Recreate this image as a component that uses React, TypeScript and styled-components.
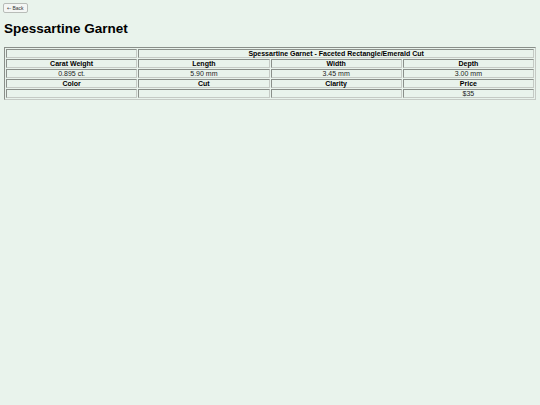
import React from "react";
import styled, { createGlobalStyle } from "styled-components";

const Global = createGlobalStyle`
  html, body { margin: 0; padding: 0; background: #e9f3ec; }
  body { font-family: "Liberation Sans", Arial, sans-serif; color: #000; }
`;

const Page = styled.div`
  padding: 3px 4px;
`;

const BackButton = styled.button`
  font-family: "Liberation Sans", Arial, sans-serif;
  font-size: 5px;
  line-height: 6px;
  padding: 1px 3px;
  margin-left: -1px;
  background: #f4f6f4;
  color: #333;
  border: 1px solid #b8bcb8;
  border-radius: 2px;
  display: block;
`;

const Title = styled.h1`
  font-size: 13.5px;
  font-weight: bold;
  margin: 8px 0 10px 0;
  line-height: 16px;
`;

const Table = styled.table`
  width: 100%;
  border-collapse: separate;
  border-spacing: 1px;
  border: 1px solid;
  border-color: #8a8f8a #c5cac5 #c5cac5 #8a8f8a;
  table-layout: fixed;
`;

const Cell = styled.td<{ $head?: boolean }>`
  border: 1px solid;
  border-color: #8a8f8a #c5cac5 #c5cac5 #8a8f8a;
  font-size: 7px;
  line-height: 7px;
  height: 7px;
  padding: 0;
  text-align: center;
  font-weight: ${(p) => (p.$head ? "bold" : "normal")};
  color: ${(p) => (p.$head ? "#000" : "#222")};
`;

const rows: { head: boolean; cells: string[] }[] = [
  { head: true, cells: ["Carat Weight", "Length", "Width", "Depth"] },
  { head: false, cells: ["0.895 ct.", "5.90 mm", "3.45 mm", "3.00 mm"] },
  { head: true, cells: ["Color", "Cut", "Clarity", "Price"] },
  { head: false, cells: ["", "", "", "$35"] },
];

export default function App() {
  return (
    <Page>
      <Global />
      <BackButton>⇠ Back</BackButton>
      <Title>Spessartine Garnet</Title>
      <Table>
        <tbody>
          <tr>
            <Cell />
            <Cell $head colSpan={3}>
              Spessartine Garnet - Faceted Rectangle/Emerald Cut
            </Cell>
          </tr>
          {rows.map((r, i) => (
            <tr key={i}>
              {r.cells.map((c, j) => (
                <Cell key={j} $head={r.head}>
                  {c}
                </Cell>
              ))}
            </tr>
          ))}
        </tbody>
      </Table>
    </Page>
  );
}
